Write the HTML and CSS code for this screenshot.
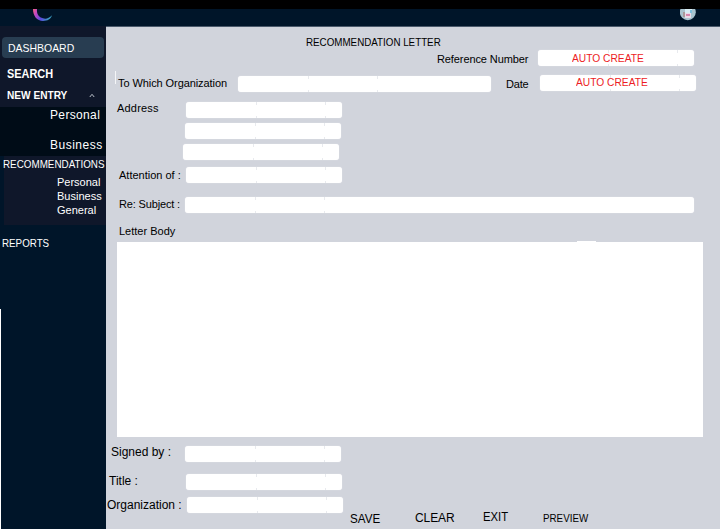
FILE: index.html
```html
<!DOCTYPE html>
<html lang="en">
<head>
<meta charset="utf-8">
<title>Recommendation Letter</title>
<link rel="stylesheet" href="styles.css">
</head>
<body>
<header class="topbar">
  <svg class="logo" width="24" height="13" viewBox="0 0 24 13">
    <defs><linearGradient id="ring" x1="0" y1="0" x2="1" y2="0.3"><stop offset="0" stop-color="#f8637c"/><stop offset=".25" stop-color="#c046c4"/><stop offset=".6" stop-color="#5a4ae0"/><stop offset="1" stop-color="#3a9ac0"/></linearGradient></defs>
    <path d="M1 0C1 7 5 12 11 12C15.500 12 19 10 20 6.300C17 9.300 14 10.200 11 9.300C7 8.500 4.500 5 5 0Z" fill="url(#ring)"/>
  </svg>
  <svg class="avatar" width="16" height="12" viewBox="0 0 16 12">
    <circle cx="7.800" cy="3.200" r="8" fill="#a9c4cf"/>
    <path d="M5 0H12V4H5Z" fill="#d8eef6"/><path d="M3 3H5V8H3Z" fill="#a89a9a"/><path d="M5 4H11V9H5Z" fill="#e9dce8"/><path d="M6 5H10V7H6Z" fill="#d886ac"/><path d="M10 1H12V4H10Z" fill="#7fc0dc"/>
  </svg>
</header>
<div class="layout">
  <nav class="sidebar">
    <div class="nav-top">
      <div class="item dashboard"><span class="caps">DASHBOARD</span></div>
      <div class="item search"><span class="caps">SEARCH</span></div>
      <div class="item entry"><span class="caps">NEW ENTRY</span><svg width="6" height="5" viewBox="0 0 6 5"><path d="M.8 4L3 1.300L5.200 4" fill="none" stroke="#b8bec8"/></svg></div>
    </div>
    <div class="nav-entry">
      <div class="personal">Personal</div>
      <div class="business">Business</div>
    </div>
    <div class="nav-rec">
      <div class="rec-title"><span class="caps">RECOMMENDATIONS</span></div>
      <div class="sub">Personal</div>
      <div class="sub">Business</div>
      <div class="sub">General</div>
    </div>
    <div class="nav-rest"><div class="reports"><span class="caps">REPORTS</span></div></div>
  </nav>
  <main class="form">
    <h1 class="title"><span class="caps">RECOMMENDATION LETTER</span></h1>
    <div class="row reference"><label>Reference Number</label><div class="field auto"><span class="caps">AUTO CREATE</span></div></div>
    <div class="row recipient"><i class="caret"></i><label class="to">To Which Organization</label><div class="field"></div><label class="date-label">Date</label><div class="field auto date"><span class="caps">AUTO CREATE</span></div></div>
    <div class="row address"><label>Address</label><div class="lines"><div class="field"></div><div class="field second"></div><div class="field third"></div></div></div>
    <div class="row attention"><label>Attention of :</label><div class="field"></div></div>
    <div class="row subject"><label>Re: Subject :</label><div class="field"></div></div>
    <label class="body-label">Letter Body</label>
    <div class="tab"></div>
    <div class="letter"></div>
    <div class="row big signed"><label>Signed by :</label><div class="field"></div></div>
    <div class="row big job"><label>Title :</label><div class="field"></div></div>
    <div class="row big org"><label>Organization :</label><div class="field"></div></div>
    <div class="actions"><div class="save"><span class="caps">SAVE</span></div><div class="clear">CLEAR</div><div class="exit"><span class="caps">EXIT</span></div><div class="preview"><span class="caps">PREVIEW</span></div></div>
  </main>
</div>
</body>
</html>
```
FILE: styles.css
```css
* { box-sizing: border-box; }
body { margin: 0; width: 720px; height: 529px; overflow: hidden; background: #d1d4dc; font: 11px/14px "Liberation Sans", Arial, sans-serif; color: #000; white-space: nowrap; }
.caps { display: inline-block; transform: scaleX(var(--fit, 1)); transform-origin: 0 50%; }
.topbar { display: flex; align-items: flex-start; height: 26px; border-top: 9px solid #000; background: #001529; }
.logo { margin-left: 32px; }
.avatar { margin-left: 624px; }
.layout { display: flex; height: 503px; }
.sidebar { display: flex; flex-direction: column; width: 106px; color: #fff; background: #001529; }
.nav-top { height: 81px; padding-top: 11px; background: #0f172a; }
.dashboard { --fit: .95; width: 102px; height: 21px; margin-left: 2px; padding-left: 6px; border-radius: 4px; background: #283d51; line-height: 22px; }
.search { --fit: .91; margin: 9px 0 0 7px; font-size: 12px; font-weight: bold; }
.entry { --fit: .92; display: flex; align-items: center; justify-content: space-between; margin: 7px 11px 0 7px; font-weight: bold; }
.nav-entry { height: 49px; padding: 1px 0 0 50px; background: #000c17; font-size: 12px; }
.personal { letter-spacing: .35px; }
.business { margin-top: 16px; letter-spacing: .5px; }
.nav-rec { height: 69px; padding-top: 1px; background: linear-gradient(#0f172a, #0f172a) 4px 0 no-repeat; }
.rec-title { --fit: .895; margin: 0 0 4px 3px; }
.sub { margin-left: 57px; }
.nav-rest { --fit: .89; flex: 1; background: linear-gradient(#fff, #fff) 0 84px / 1px 220px no-repeat; padding: 11px 0 0 2px; }
.form { flex: 1; padding-top: 8px; border-top: 1px solid #4a596b; }
.title { --fit: .89; margin: 0 0 0 200px; font: 11px/15px "Liberation Sans", Arial, sans-serif; }
.row { display: flex; height: 16px; line-height: 16px; }
.field { flex: none; width: 156px; height: 16px; border-radius: 3px; background: linear-gradient(#e8eaee, #e8eaee) 70px 0 / 1px 3px no-repeat, linear-gradient(#e8eaee, #e8eaee) 139px 0 / 1px 3px no-repeat, linear-gradient(#e8eaee, #e8eaee) 70px 100% / 1px 2px no-repeat, linear-gradient(#e8eaee, #e8eaee) 139px 100% / 1px 2px no-repeat, #fff; box-shadow: 0 0 1px #f2f3f6; }
.auto { --fit: .93; padding-left: 34px; color: #ed1c24; }
.reference label { width: 101px; margin: 1px 0 0 331px; letter-spacing: -0.1px; }
.recipient { margin-top: 9px; }
.caret { width: 1px; height: 13px; margin: -4px 2px 0 9px; background: #f4f5f7; }
.to { width: 120px; letter-spacing: -0.08px; }
.recipient .to + .field { width: 253px; margin-top: 1px; }
.date-label { width: 34px; margin: 1px 0 0 15px; letter-spacing: -0.2px; }
.date { padding-left: 36px; line-height: 15px; }
.address { height: 58px; margin-top: 11px; }
.address label { width: 69px; margin: -2px 0 0 11px; letter-spacing: .2px; }
.lines { display: flex; flex-direction: column; gap: 5px; }
.second { margin-left: -1px; }
.third { margin-left: -3px; }
.attention { margin-top: 7px; }
.attention label { width: 67px; margin-left: 13px; }
.subject { margin-top: 14px; }
.subject label { width: 66px; margin: -1px 0 0 13px; letter-spacing: -0.15px; }
.subject .field { width: 509px; }
.body-label { display: block; height: 15px; margin: 11px 0 0 13px; }
.tab { width: 19px; height: 1px; margin: 2px 0 0 471px; background: #fff; }
.letter { width: 586px; height: 195px; margin-left: 11px; background: #fff; }
.big { font-size: 12px; }
.big label { margin-top: -1px; }
.signed { margin-top: 9px; }
.signed label { width: 74px; margin: -2px 0 0 5px; }
.job { margin-top: 12px; }
.job label { width: 77px; margin-left: 3px; }
.org { margin-top: 7px; }
.org label { width: 80px; margin: 0 0 0 1px; }
.actions { display: flex; height: 16px; font-size: 12px; }
.save { --fit: .97; width: 65px; margin: -1px 0 0 244px; }
.clear { width: 68px; margin-top: -2px; letter-spacing: -0.1px; }
.exit { --fit: .94; width: 60px; margin-top: -3px; }
.preview { --fit: .89; margin-top: -2px; font-size: 11px; }
```
